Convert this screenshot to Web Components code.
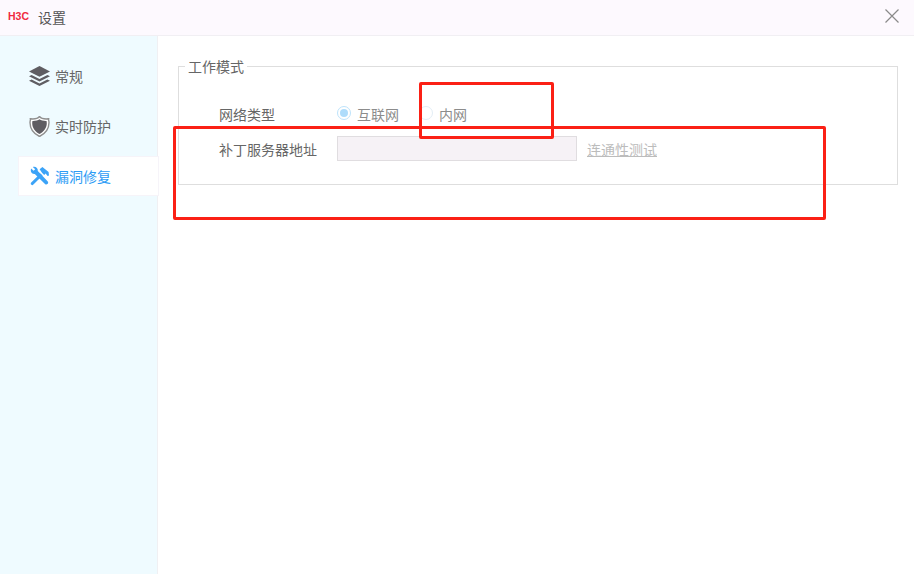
<!DOCTYPE html>
<html>
<head>
<meta charset="utf-8">
<title>设置</title>
<style>
  html, body { margin: 0; padding: 0; height: 100%; background: #fff; }
  body { font: 14px "Noto Sans CJK SC", "Liberation Sans", sans-serif; color: #666; overflow: hidden; }
</style>
</head>
<body>
<settings-window>
  <title-bar slot="title">设置</title-bar>
  <nav-item slot="nav" icon="layers">常规</nav-item>
  <nav-item slot="nav" icon="shield">实时防护</nav-item>
  <nav-item slot="nav" icon="tools" active>漏洞修复</nav-item>
  <work-mode slot="main"></work-mode>
  <mark-box style="left:419px;top:82px;width:135px;height:57px"></mark-box>
  <mark-box style="left:173px;top:126px;width:653px;height:94px"></mark-box>
</settings-window>

<script>
  class settingsWindow extends HTMLElement {
    constructor() {
      super();
      this.attachShadow({ mode: 'open' }).innerHTML = `
        <style>
          :host { display: flex; flex-direction: column; position: relative; width: 914px; height: 574px; }
          .body { flex: 1; display: flex; min-height: 0; }
          nav { width: 158px; box-sizing: border-box; padding: 21px 0 0 19px; background: #effbff; border-right: 1px solid #f0f0f3;
                display: flex; flex-direction: column; gap: 12px; }
          main { flex: 1; padding: 20px 16px 0 20px; }
        </style>
        <slot name="title"></slot>
        <div class="body">
          <nav><slot name="nav"></slot></nav>
          <main><slot name="main"></slot></main>
        </div>
        <slot></slot>`;
    }
  }
  customElements.define('settings-window', settingsWindow);

  class titleBar extends HTMLElement {
    constructor() {
      super();
      this.attachShadow({ mode: 'open' }).innerHTML = `
        <style>
          :host { display: flex; align-items: center; height: 35px; padding: 0 14px 0 8px; background: #fdf9fe;
                  border-bottom: 1px solid #f1eff3; color: #555; font-size: 14px; }
          .logo { font: bold 10.5px/1 "Liberation Sans", sans-serif; color: #f02a40; width: 30px; letter-spacing: 0; margin-top: -3px; }
          .text { flex: 1; margin-top: -2px; }
          svg { display: block; margin-top: -3px; }
        </style>
        <span class="logo">H3C</span>
        <span class="text"><slot></slot></span>
        <svg width="16" height="16" viewBox="0 0 16 16"><path d="M1.5 1.5 14.5 14.5M14.5 1.5 1.5 14.5" stroke="#8a8a8a" stroke-width="1.2" fill="none"/></svg>`;
    }
  }
  customElements.define('title-bar', titleBar);

  const navIcons = {
    layers: `<path d="M10.5 0 21 5.4 10.5 10.8 0 5.4Z"/><path d="M2.6 8.9 10.5 12.9 18.4 8.9 21 10.2 10.5 15.6 0 10.2Z"/><path d="M2.6 13.4 10.5 17.4 18.4 13.4 21 14.7 10.5 20.1 0 14.7Z"/>`,
    shield: `<path d="M10.5 0.5C12 2.4 15.8 3.2 19.6 2.8 19.4 3.8 20 5 20 6.5 20 13.5 15.5 18 10.5 20.5 5.5 18 1 13.5 1 6.5 1 5 1.6 3.8 1.4 2.8 5.2 3.2 9 2.4 10.5 0.5Z" fill="#fff" stroke="#8f8f8f" stroke-width="1.4"/><path d="M10.5 3.2C12 4.4 14.8 5 17.6 4.9 17.5 5.6 17.8 6 17.8 7 17.8 12.2 14.4 16 10.5 18 6.6 16 3.2 12.2 3.2 7 3.2 6 3.5 5.6 3.4 4.9 6.2 5 9 4.4 10.5 3.2Z"/>`,
    tools: `<path d="M2.2 2.6 4.6 4.8 6.2 3.2 3.8 1C6.4 0 9.2 2 8.8 5L18.8 15.6C19.8 16.8 18.8 18.4 17.4 18.6 16.8 18.6 16.4 18.4 16 18L5.8 8C3.2 8.6 .8 5.8 2.2 2.6Z"/><path d="M10.6 3.2 13.4 1 19.6 6 20 9.6 18.6 10 16.6 7.4 15.2 9 13.2 7 Z"/><path d="M11.4 7.4 13.6 9.6 4.4 18.6C3.6 19.4 2.8 19.2 2.2 18.6 1.6 18 1.6 17.2 2.2 16.4Z"/>`
  };

  class navItem extends HTMLElement {
    constructor() {
      super();
      const on = this.hasAttribute('active');
      this.attachShadow({ mode: 'open' }).innerHTML = `
        <style>
          :host { display: flex; align-items: center; gap: 5px; height: 38px; box-sizing: border-box; padding-left: 10px; margin-right: -1px;
                  color: ${on ? '#2d9cf5' : '#666'}; ${on ? 'background:#fff; box-shadow: 0 0 0 1px #f6f4f9;' : ''} }
          svg { display: block; fill: ${on ? '#3ca3f7' : '#5f5d62'}; }
          span { line-height: 20px; }
        </style>
        <svg width="21" height="21" viewBox="0 0 21 21">${navIcons[this.getAttribute('icon')]}</svg>
        <span><slot></slot></span>`;
    }
  }
  customElements.define('nav-item', navItem);

  class radioOption extends HTMLElement {
    constructor() {
      super();
      const on = this.hasAttribute('checked');
      this.attachShadow({ mode: 'open' }).innerHTML = `
        <style>
          :host { display: inline-flex; align-items: center; gap: 6px; color: #8c8c8c; }
          i { width: 14px; height: 14px; box-sizing: border-box; border-radius: 50%; background: #fff; border: 1px solid ${on ? '#bde3fb' : '#e3eef6'};
              display: flex; align-items: center; justify-content: center; margin-top: -2px; }
          b { width: 8px; height: 8px; border-radius: 50%; background: #aedcfb; display: ${on ? 'block' : 'none'}; }
        </style>
        <i><b></b></i><span><slot></slot></span>`;
    }
  }
  customElements.define('radio-option', radioOption);

  class workMode extends HTMLElement {
    constructor() {
      super();
      this.attachShadow({ mode: 'open' }).innerHTML = `
        <style>
          :host { display: block; }
          fieldset { margin: 0; padding: 0; height: 129px; box-sizing: border-box; border: 1px solid #dedede; min-width: 0; }
          legend { margin-left: 6px; padding: 0 3px; line-height: 20px; color: #666; }
          .rows { padding: 26px 0 0 40px; }
          .row { display: flex; align-items: center; }
          .row + .row { margin-top: 10px; }
          label { width: 118px; color: #666; }
          .net { height: 24px; }
          radio-option + radio-option { margin-left: 20px; }
          .addr { width: 240px; height: 25px; box-sizing: border-box; background: #f6f2f6; border: 1px solid #e0dde0; }
          a { margin-left: 10px; color: #bcbcbc; text-decoration: underline; }
        </style>
        <fieldset>
          <legend>工作模式</legend>
          <div class="rows">
            <div class="row net">
              <label>网络类型</label>
              <radio-option checked>互联网</radio-option>
              <radio-option>内网</radio-option>
            </div>
            <div class="row">
              <label>补丁服务器地址</label>
              <div class="addr"></div>
              <a>连通性测试</a>
            </div>
          </div>
        </fieldset>`;
    }
  }
  customElements.define('work-mode', workMode);

  // red annotation rectangle drawn over the screenshot
  class markBox extends HTMLElement {
    constructor() {
      super();
      this.attachShadow({ mode: 'open' }).innerHTML = `
        <style>
          :host { display: block; position: absolute; box-sizing: border-box; border: 3px solid #fb2015; border-radius: 2px; pointer-events: none; }
        </style>`;
    }
  }
  customElements.define('mark-box', markBox);
</script>
</body>
</html>
